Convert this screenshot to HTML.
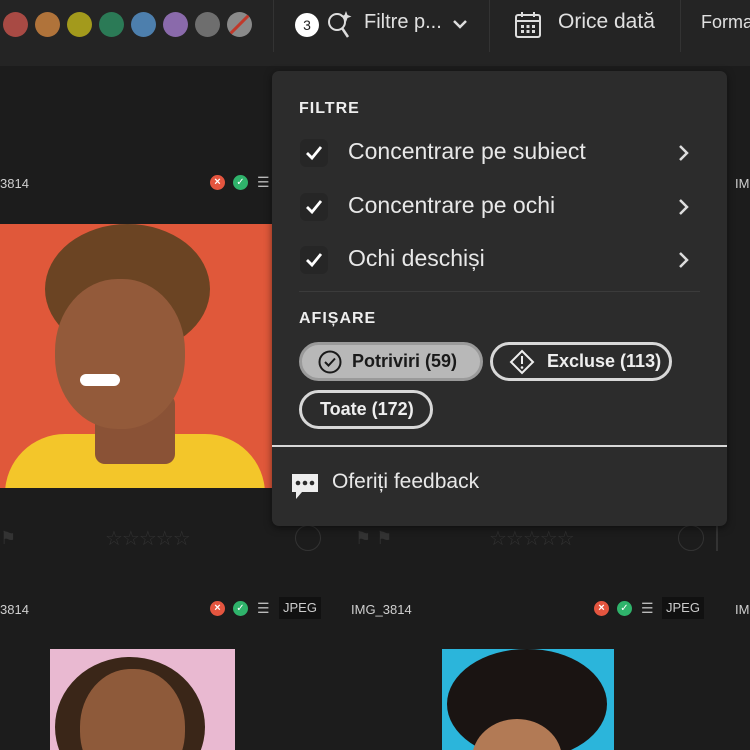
<!DOCTYPE html>
<html style="overflow:hidden"><head><meta charset="utf-8"><style>
*{margin:0;padding:0;box-sizing:border-box}
html,body{width:750px;height:750px;overflow:hidden}
body{background:#1c1c1c;font-family:"Liberation Sans",sans-serif;color:#e6e6e6;position:relative}
.a{position:absolute}
.dot{position:absolute;top:12px;width:25px;height:25px;border-radius:50%}
.lbl{font-size:13px;color:#cfcfcf}
.pill{position:absolute;height:39px;border:3px solid #d8d8d8;border-radius:20px;font-size:18px;font-weight:bold;display:flex;align-items:center;color:#eee}
.item{position:absolute;left:348px;font-size:23px;color:#e8e8e8}
.chk{position:absolute;left:300px;width:28px;height:28px;border-radius:6px;background:#262626}
.chev{position:absolute;left:677px}
</style></head><body>
<div class="a" style="left:0;top:0;width:750px;height:66px;background:#242424"></div>
<div class="dot" style="left:3px;background:#a84a44"></div>
<div class="dot" style="left:35px;background:#b0733a"></div>
<div class="dot" style="left:67px;background:#a39a1c"></div>
<div class="dot" style="left:99px;background:#2b7a56"></div>
<div class="dot" style="left:131px;background:#4d7fad"></div>
<div class="dot" style="left:163px;background:#8a6aab"></div>
<div class="dot" style="left:195px;background:#6e6e6e"></div>
<div class="dot" style="left:227px;background:#8a8a8a;overflow:hidden"><div class="a" style="left:11px;top:-3px;width:3px;height:31px;background:#c0392b;transform:rotate(45deg)"></div></div>
<div class="a" style="left:273px;top:0;width:1px;height:52px;background:#333"></div>
<div class="a" style="left:489px;top:0;width:1px;height:52px;background:#333"></div>
<div class="a" style="left:680px;top:0;width:1px;height:52px;background:#333"></div>
<div class="a" style="left:295px;top:13px;width:24px;height:24px;border-radius:50%;background:#fff;color:#222;font-size:14px;text-align:center;line-height:24px">3</div>
<svg class="a" style="left:326px;top:8px" width="28" height="32" viewBox="0 0 28 32"><circle cx="11" cy="14" r="8" fill="none" stroke="#ddd" stroke-width="2"/><line x1="16" y1="20" x2="22" y2="29" stroke="#ddd" stroke-width="2.5"/><path d="M20 3 l1.5 4 4 1.5 -4 1.5 -1.5 4 -1.5 -4 -4 -1.5 4 -1.5z" fill="#ddd"/></svg>
<div class="a" style="left:364px;top:11px;font-size:20px;color:#e0e0e0">Filtre p...</div>
<svg class="a" style="left:451px;top:17px" width="18" height="14"><path d="M3 4 L9 10 L15 4" fill="none" stroke="#ddd" stroke-width="2.5"/></svg>
<svg class="a" style="left:513px;top:10px" width="30" height="30" viewBox="0 0 30 30"><rect x="3" y="5" width="24" height="22" rx="2" fill="none" stroke="#ddd" stroke-width="2"/><line x1="3" y1="11" x2="27" y2="11" stroke="#ddd" stroke-width="2"/><line x1="9" y1="2" x2="9" y2="7" stroke="#ddd" stroke-width="2"/><line x1="21" y1="2" x2="21" y2="7" stroke="#ddd" stroke-width="2"/><g fill="#ddd"><rect x="8" y="15" width="3" height="3"/><rect x="13.5" y="15" width="3" height="3"/><rect x="19" y="15" width="3" height="3"/><rect x="8" y="20" width="3" height="3"/><rect x="13.5" y="20" width="3" height="3"/><rect x="19" y="20" width="3" height="3"/></g></svg>
<div class="a" style="left:558px;top:10px;font-size:21px;color:#e0e0e0">Orice dată</div>
<div class="a" style="left:701px;top:12px;font-size:18px;color:#e0e0e0">Forma</div>

<div class="a lbl" style="left:0;top:176px">3814</div>
<div class="a" style="left:210px;top:175px;width:15px;height:15px;border-radius:50%;background:#e4553f;color:#fff;font-size:11px;text-align:center;line-height:15px;font-weight:bold">×</div>
<div class="a" style="left:233px;top:175px;width:15px;height:15px;border-radius:50%;background:#2fb36b;color:#fff;font-size:10px;text-align:center;line-height:15px">✓</div>
<div class="a" style="left:257px;top:174px;font-size:14px;color:#bbb">☰</div>
<div class="a lbl" style="left:735px;top:176px">IM</div>
<div class="a" style="left:0;top:224px;width:272px;height:264px;background:#e0583a;overflow:hidden">
 <div class="a" style="left:5px;top:210px;width:260px;height:80px;border-radius:60px 60px 0 0;background:#f3c62a"></div>
 <div class="a" style="left:95px;top:170px;width:80px;height:70px;background:#8a5236;border-radius:10px"></div>
 <div class="a" style="left:45px;top:0;width:165px;height:130px;border-radius:50%;background:#6b4423"></div>
 <div class="a" style="left:55px;top:55px;width:130px;height:150px;border-radius:48%;background:#935a3a"></div>
 <div class="a" style="left:80px;top:150px;width:40px;height:12px;border-radius:6px;background:#fff"></div>
</div>
<div class="a" style="left:0;top:528px;font-size:18px;color:#333">⚑</div>
<div class="a" style="left:105px;top:526px;font-size:20px;color:#333;letter-spacing:-1px">☆☆☆☆☆</div>
<div class="a" style="left:295px;top:525px;width:26px;height:26px;border-radius:50%;border:1px solid #333"></div>
<div class="a" style="left:355px;top:528px;font-size:18px;color:#333">⚑ ⚑</div>
<div class="a" style="left:489px;top:526px;font-size:20px;color:#333;letter-spacing:-1px">☆☆☆☆☆</div>
<div class="a" style="left:678px;top:525px;width:26px;height:26px;border-radius:50%;border:1px solid #333"></div>
<div class="a" style="left:716px;top:525px;width:2px;height:26px;background:#333"></div>

<div class="a lbl" style="left:0;top:602px">3814</div>
<div class="a" style="left:210px;top:601px;width:15px;height:15px;border-radius:50%;background:#e4553f;color:#fff;font-size:11px;text-align:center;line-height:15px;font-weight:bold">×</div>
<div class="a" style="left:233px;top:601px;width:15px;height:15px;border-radius:50%;background:#2fb36b;color:#fff;font-size:10px;text-align:center;line-height:15px">✓</div>
<div class="a" style="left:257px;top:600px;font-size:14px;color:#bbb">☰</div>
<div class="a" style="left:279px;top:597px;width:42px;height:22px;background:#111;font-size:13px;color:#ccc;text-align:center;line-height:22px">JPEG</div>
<div class="a lbl" style="left:351px;top:602px">IMG_3814</div>
<div class="a" style="left:594px;top:601px;width:15px;height:15px;border-radius:50%;background:#e4553f;color:#fff;font-size:11px;text-align:center;line-height:15px;font-weight:bold">×</div>
<div class="a" style="left:617px;top:601px;width:15px;height:15px;border-radius:50%;background:#2fb36b;color:#fff;font-size:10px;text-align:center;line-height:15px">✓</div>
<div class="a" style="left:641px;top:600px;font-size:14px;color:#bbb">☰</div>
<div class="a" style="left:662px;top:597px;width:42px;height:22px;background:#111;font-size:13px;color:#ccc;text-align:center;line-height:22px">JPEG</div>
<div class="a lbl" style="left:735px;top:602px">IM</div>
<div class="a" style="left:50px;top:649px;width:185px;height:101px;background:#e9b9d1;overflow:hidden">
 <div class="a" style="left:5px;top:8px;width:150px;height:140px;border-radius:50%;background:#3a2618"></div>
 <div class="a" style="left:30px;top:20px;width:105px;height:120px;border-radius:48%;background:#8e5a3a"></div>
</div>
<div class="a" style="left:442px;top:649px;width:172px;height:101px;background:#2bb5db;overflow:hidden">
 <div class="a" style="left:5px;top:0;width:160px;height:110px;border-radius:50%;background:#1a1412"></div>
 <div class="a" style="left:30px;top:70px;width:90px;height:80px;border-radius:50%;background:#b27a55"></div>
</div>

<div class="a" style="left:272px;top:71px;width:455px;height:455px;background:#2c2c2c;border-radius:7px;box-shadow:0 2px 8px rgba(0,0,0,.5)"></div>
<div class="a" style="left:299px;top:100px;font-size:16px;font-weight:bold;letter-spacing:1px;color:#eee">FILTRE</div>
<div class="chk" style="top:139px"></div><svg class="a" style="left:304px;top:143px" width="20" height="20"><path d="M3 10 L8 15 L17 4" fill="none" stroke="#fff" stroke-width="2.8"/></svg>
<div class="item" style="top:138px">Concentrare pe subiect</div>
<svg class="chev" style="top:143px" width="14" height="20"><path d="M3 3 L10 10 L3 17" fill="none" stroke="#ddd" stroke-width="2.5"/></svg>
<div class="chk" style="top:193px"></div><svg class="a" style="left:304px;top:197px" width="20" height="20"><path d="M3 10 L8 15 L17 4" fill="none" stroke="#fff" stroke-width="2.8"/></svg>
<div class="item" style="top:192px">Concentrare pe ochi</div>
<svg class="chev" style="top:197px" width="14" height="20"><path d="M3 3 L10 10 L3 17" fill="none" stroke="#ddd" stroke-width="2.5"/></svg>
<div class="chk" style="top:246px"></div><svg class="a" style="left:304px;top:250px" width="20" height="20"><path d="M3 10 L8 15 L17 4" fill="none" stroke="#fff" stroke-width="2.8"/></svg>
<div class="item" style="top:245px">Ochi deschiși</div>
<svg class="chev" style="top:250px" width="14" height="20"><path d="M3 3 L10 10 L3 17" fill="none" stroke="#ddd" stroke-width="2.5"/></svg>
<div class="a" style="left:299px;top:291px;width:401px;height:1px;background:#3b3b3b"></div>
<div class="a" style="left:299px;top:310px;font-size:16px;font-weight:bold;letter-spacing:1px;color:#eee">AFIȘARE</div>
<div class="pill" style="left:299px;top:342px;width:184px;background:#b8b8b8;border-color:#9a9a9a;color:#1a1a1a">
 <svg style="margin-left:16px;margin-right:10px" width="24" height="24"><circle cx="12" cy="12" r="10.5" fill="none" stroke="#1a1a1a" stroke-width="2"/><path d="M7 12 L10.5 15.5 L17 8.5" fill="none" stroke="#1a1a1a" stroke-width="2"/></svg>Potriviri (59)</div>
<div class="pill" style="left:490px;top:342px;width:182px">
 <svg style="margin-left:16px;margin-right:12px" width="26" height="26"><path d="M13 2 L24 13 L13 24 L2 13z" fill="none" stroke="#eee" stroke-width="2"/><line x1="13" y1="7" x2="13" y2="15" stroke="#eee" stroke-width="2"/><circle cx="13" cy="18.5" r="1.3" fill="#eee"/></svg>Excluse (113)</div>
<div class="pill" style="left:299px;top:390px;width:134px;padding-left:18px">Toate (172)</div>
<div class="a" style="left:272px;top:445px;width:455px;height:2px;background:#d8d8d8"></div>
<svg class="a" style="left:290px;top:472px" width="30" height="30"><path d="M2 2 H28 V20 H12 L6 27 V20 H2z" fill="#eee"/><circle cx="8" cy="11" r="2.3" fill="#2c2c2c"/><circle cx="15" cy="11" r="2.3" fill="#2c2c2c"/><circle cx="22" cy="11" r="2.3" fill="#2c2c2c"/></svg>
<div class="a" style="left:332px;top:470px;font-size:21px;color:#e8e8e8">Oferiți feedback</div>
</body></html>
